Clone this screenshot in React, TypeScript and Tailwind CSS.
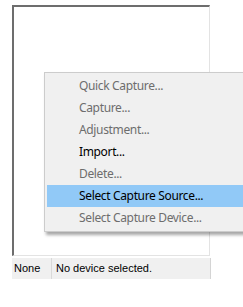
import React from 'react';

const items: { label: string; enabled?: boolean; active?: boolean }[] = [
  { label: 'Quick Capture...' },
  { label: 'Capture...' },
  { label: 'Adjustment...' },
  { label: 'Import...', enabled: true },
  { label: 'Delete...' },
  { label: 'Select Capture Source...', enabled: true, active: true },
  { label: 'Select Capture Device...' },
];

export default function App() {
  return (
    <div className="relative w-[243px] h-[307px] bg-white overflow-hidden">
      <div className="pt-[5px] pl-[12px]">
        {/* preview panel, sunken border */}
        <div className="w-[198px] h-[251px] border-t-2 border-l-2 border-t-[#6d6d6d] border-l-[#6d6d6d] border-r border-b border-r-[#e3e3e3] border-b-[#e3e3e3] bg-white" />

        {/* status bar */}
        <div
          className="mt-[2px] w-[199px] h-[21px] flex items-center bg-[#f0f0f0] border-r border-r-[#d4d4d4] text-[11px] text-black"
          style={{ fontFamily: '"Liberation Sans", Arial, sans-serif' }}
        >
          <div className="w-[40px] h-full flex items-center pl-[2px] border-r border-r-[#d9d9d9]">None</div>
          <div className="pl-[4px]">No device selected.</div>
        </div>
      </div>

      {/* context menu */}
      <div
        className="absolute left-[44px] top-[72px] w-[220px] bg-[#f0f0f0] border border-[#cccccc] py-[2px] pl-[2px] shadow-[2px_3px_3px_rgba(0,0,0,0.35)]"
        style={{ fontFamily: '"Noto Sans", "Open Sans", sans-serif' }}
      >
        {items.map((item) => (
          <div
            key={item.label}
            className={
              'h-[22px] flex items-center pl-[32px] text-[12px] tracking-[-0.35px] ' +
              (item.active ? 'bg-[#91c9f7] ' : '') +
              (item.enabled ? 'text-black' : 'text-[#6d6d6d]')
            }
          >
            {item.label}
          </div>
        ))}
      </div>
    </div>
  );
}
